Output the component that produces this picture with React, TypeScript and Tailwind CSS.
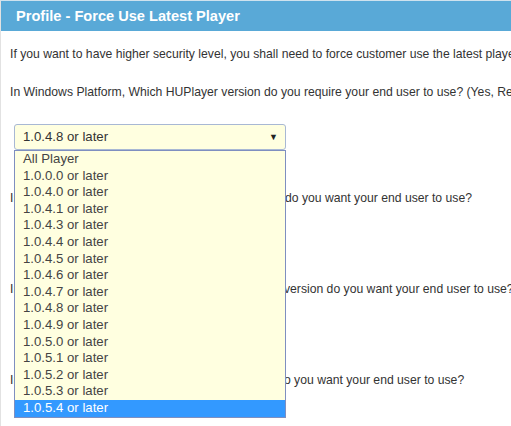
import React from "react";

const options = [
  "All Player",
  "1.0.0.0 or later",
  "1.0.4.0 or later",
  "1.0.4.1 or later",
  "1.0.4.3 or later",
  "1.0.4.4 or later",
  "1.0.4.5 or later",
  "1.0.4.6 or later",
  "1.0.4.7 or later",
  "1.0.4.8 or later",
  "1.0.4.9 or later",
  "1.0.5.0 or later",
  "1.0.5.1 or later",
  "1.0.5.2 or later",
  "1.0.5.3 or later",
  "1.0.5.4 or later",
];

function FakeSelect({ value, open }: { value: string; open?: boolean }) {
  return (
    <div className="relative w-[272px] ml-[13px]">
      <div className="h-[26px] flex items-center justify-between pl-[8px] pr-[7px] bg-[#ffffe0] border border-[#a8b8d4] rounded-[3px] text-[13.2px] text-[#333]">
        <span>{value}</span>
        <span className="text-[9px] text-[#222]">▼</span>
      </div>
      {open && (
        <div className="absolute left-0 top-full w-full z-10 bg-[#ffffe0] border border-[#7f8fc0]">
          {options.map((o, i) => (
            <div
              key={o}
              className={
                i === options.length - 1
                  ? "h-[16.6px] leading-[16.6px] pl-[8px] text-[13.2px] bg-[#3399ff] text-white"
                  : "h-[16.6px] leading-[16.6px] pl-[8px] text-[13.2px] text-[#444]"
              }
            >
              {o}
            </div>
          ))}
        </div>
      )}
    </div>
  );
}

export default function App() {
  return (
    <div
      className="w-[511px] h-[426px] overflow-hidden bg-white border-l border-[#e2e2e2] border-t border-t-[#cfe2ee]"
      style={{ fontFamily: '"Liberation Sans", Arial, sans-serif' }}
    >
      <div className="h-[30px] bg-[#59a9d7] flex items-center pl-[15px]">
        <span className="text-white font-bold text-[14.6px] leading-none">Profile - Force Use Latest Player</span>
      </div>
      <div className="text-[12.2px] text-[#333] leading-[18px]">
        <p className="mt-[14px] ml-[9px] whitespace-nowrap">
          If you want to have higher security level, you shall need to force customer use the latest player.
        </p>
        <p className="mt-[20px] ml-[9px] whitespace-nowrap">
          In Windows Platform, Which HUPlayer version do you require your end user to use? (Yes, Required)
        </p>
        <div className="mt-[23px]">
          <FakeSelect value="1.0.4.8 or later" open />
        </div>
        <p className="mt-[39px] ml-[9px] whitespace-nowrap">
          In Mac OS Platform, Which HUPlayer Mac version do you want your end user to use?
        </p>
        <div className="mt-[23px]">
          <FakeSelect value="All Player" />
        </div>
        <p className="mt-[24px] ml-[9px] whitespace-nowrap">
          In Android Platform, Which HUPlayer for Android's version do you want your end user to use?
        </p>
        <div className="mt-[23px]">
          <FakeSelect value="All Player" />
        </div>
        <p className="mt-[24px] ml-[9px] whitespace-nowrap">
          In Apple's iOS Platform, Which HUPlayer version do you want your end user to use?
        </p>
      </div>
    </div>
  );
}
